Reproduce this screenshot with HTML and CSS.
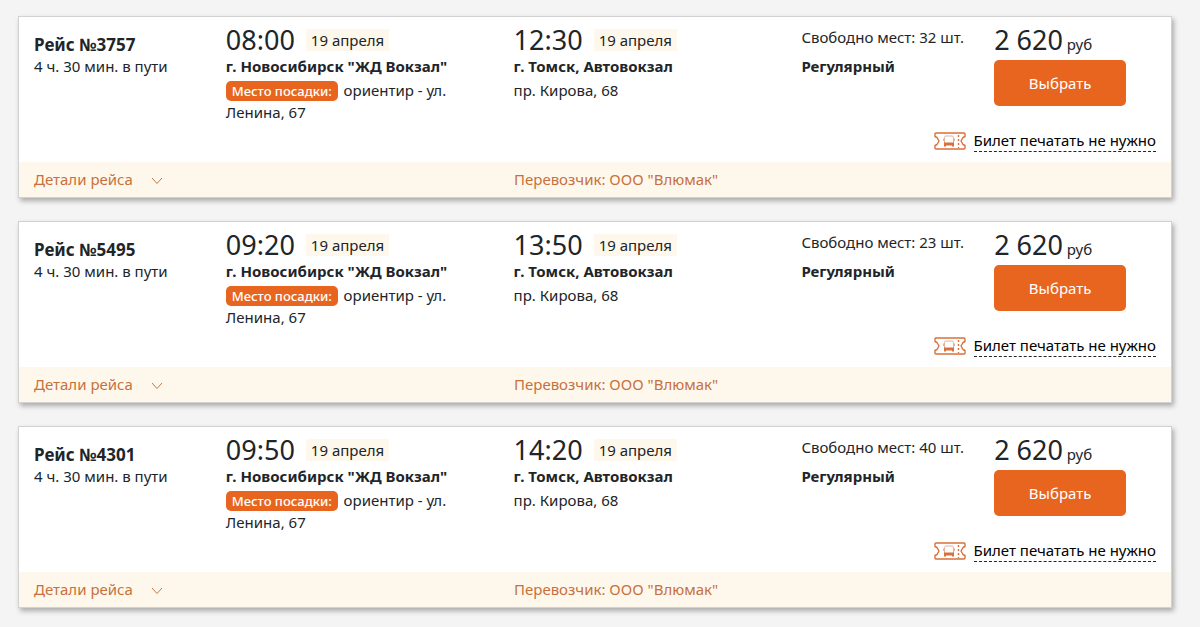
FILE: index.html
```html
<!DOCTYPE html>
<html lang="ru">
<head>
    <meta charset="UTF-8">
    <meta name="viewport" content="width=device-width, initial-scale=1.0">
    <title>Новосибирск - Томск, расписание рейсов</title>
    <link rel="stylesheet" href="styles.css">
</head>
<body>
    <!-- Shared icons -->
    <svg class="sprite" aria-hidden="true">
        <symbol id="icon-ticket" viewBox="0 0 32 18">
            <g fill="none" stroke="#d9703a" stroke-width="1.4" stroke-linejoin="round">
                <path d="M2 1H30Q31 1 31 2V4.500L29 5.500L27 9L29 12.500L31 13.500V16Q31 17 30 17H2Q1 17 1 16V13.500L3 12.500L5 9L3 5.500L1 4.500V2Q1 1 2 1Z"/>
                <path d="M24.500 3V16" stroke-dasharray="2 2"/>
                <path d="M10.500 11V5.500Q10.500 4 12 4H18Q19.500 4 19.500 5.500V11M9.500 6.500V9M20.500 6.500V9" stroke="#e3b29a" stroke-width="1"/>
            </g>
            <path d="M10 10.500H20V14.500H18V13.500H12V14.500H10Z" fill="#d9703a"/>
        </symbol>
        <symbol id="icon-arrow" viewBox="0 0 12 8">
            <path d="M1 1L6 6.500L11 1" fill="none" stroke="#c47845" stroke-width="1"/>
        </symbol>
    </svg>

    <main class="trips">
        <article class="trip">
            <div class="trip-info">
                <div class="col">
                    <h2 class="trip-number">Рейс №3757</h2>
                    <div>4 ч. 30 мин. в пути</div>
                </div>
                <div class="col">
                    <div class="point-time"><time class="big">08:00</time><span class="date">19 апреля</span></div>
                    <div class="bold">г. Новосибирск "ЖД Вокзал"</div>
                    <div class="address"><span class="badge">Место посадки:</span> ориентир - ул. Ленина, 67</div>
                </div>
                <div class="col">
                    <div class="point-time"><time class="big">12:30</time><span class="date">19 апреля</span></div>
                    <div class="bold">г. Томск, Автовокзал</div>
                    <div class="address">пр. Кирова, 68</div>
                </div>
                <div class="col">
                    <div class="seats">Свободно мест: 32 шт.</div>
                    <div class="bold">Регулярный</div>
                </div>
                <div class="col">
                    <div class="price"><span class="big">2 620</span> руб</div>
                    <button type="button" class="btn">Выбрать</button>
                </div>
            </div>
            <div class="ticket">
                <svg class="ticket-icon" aria-hidden="true"><use href="#icon-ticket"/></svg>
                <a href="#" class="ticket-link">Билет печатать не нужно</a>
            </div>
            <div class="trip-footer">
                <a href="#" class="details">Детали рейса <svg class="arrow" aria-hidden="true"><use href="#icon-arrow"/></svg></a>
                <div class="carrier">Перевозчик: ООО "Влюмак"</div>
            </div>
        </article>

        <article class="trip">
            <div class="trip-info">
                <div class="col">
                    <h2 class="trip-number">Рейс №5495</h2>
                    <div>4 ч. 30 мин. в пути</div>
                </div>
                <div class="col">
                    <div class="point-time"><time class="big">09:20</time><span class="date">19 апреля</span></div>
                    <div class="bold">г. Новосибирск "ЖД Вокзал"</div>
                    <div class="address"><span class="badge">Место посадки:</span> ориентир - ул. Ленина, 67</div>
                </div>
                <div class="col">
                    <div class="point-time"><time class="big">13:50</time><span class="date">19 апреля</span></div>
                    <div class="bold">г. Томск, Автовокзал</div>
                    <div class="address">пр. Кирова, 68</div>
                </div>
                <div class="col">
                    <div class="seats">Свободно мест: 23 шт.</div>
                    <div class="bold">Регулярный</div>
                </div>
                <div class="col">
                    <div class="price"><span class="big">2 620</span> руб</div>
                    <button type="button" class="btn">Выбрать</button>
                </div>
            </div>
            <div class="ticket">
                <svg class="ticket-icon" aria-hidden="true"><use href="#icon-ticket"/></svg>
                <a href="#" class="ticket-link">Билет печатать не нужно</a>
            </div>
            <div class="trip-footer">
                <a href="#" class="details">Детали рейса <svg class="arrow" aria-hidden="true"><use href="#icon-arrow"/></svg></a>
                <div class="carrier">Перевозчик: ООО "Влюмак"</div>
            </div>
        </article>

        <article class="trip">
            <div class="trip-info">
                <div class="col">
                    <h2 class="trip-number">Рейс №4301</h2>
                    <div>4 ч. 30 мин. в пути</div>
                </div>
                <div class="col">
                    <div class="point-time"><time class="big">09:50</time><span class="date">19 апреля</span></div>
                    <div class="bold">г. Новосибирск "ЖД Вокзал"</div>
                    <div class="address"><span class="badge">Место посадки:</span> ориентир - ул. Ленина, 67</div>
                </div>
                <div class="col">
                    <div class="point-time"><time class="big">14:20</time><span class="date">19 апреля</span></div>
                    <div class="bold">г. Томск, Автовокзал</div>
                    <div class="address">пр. Кирова, 68</div>
                </div>
                <div class="col">
                    <div class="seats">Свободно мест: 40 шт.</div>
                    <div class="bold">Регулярный</div>
                </div>
                <div class="col">
                    <div class="price"><span class="big">2 620</span> руб</div>
                    <button type="button" class="btn">Выбрать</button>
                </div>
            </div>
            <div class="ticket">
                <svg class="ticket-icon" aria-hidden="true"><use href="#icon-ticket"/></svg>
                <a href="#" class="ticket-link">Билет печатать не нужно</a>
            </div>
            <div class="trip-footer">
                <a href="#" class="details">Детали рейса <svg class="arrow" aria-hidden="true"><use href="#icon-arrow"/></svg></a>
                <div class="carrier">Перевозчик: ООО "Влюмак"</div>
            </div>
        </article>
    </main>
</body>
</html>
```
FILE: styles.css
```css
* {
    box-sizing: border-box;
}
body {
    margin: 0;
    background-color: #f4f4f4;
    color: #212529;
    font-family: "Noto Sans", "Open Sans", sans-serif;
    font-size: 15px;
    line-height: 22px;
}
.sprite {
    display: none;
}
.trips {
    display: flex;
    flex-direction: column;
    gap: 23px;
    padding: 16px 28px 16px 18px;
}
.trip {
    background-color: #fff;
    border: 1px solid #d2d2d2;
    box-shadow: 2px 3px 5px rgba(0,0,0,0.3);
}
.trip-info,
.trip-footer {
    display: grid;
    grid-template-columns: 2fr 3fr 3fr 2fr 2fr;
}
.trip-info {
    padding-top: 7px;
}
.col {
    padding: 0 15px;
}
.trip-number {
    margin: 0;
    padding-top: 11px;
    font-size: 17px;
    line-height: 20px;
}
.point-time {
    display: flex;
    align-items: center;
    gap: 11px;
    height: 31px;
}
.big {
    font-size: 27px;
    line-height: 32px;
}
.date {
    padding: 0 5px;
    background-color: #fef8ec;
}
.bold {
    font-weight: bold;
}
.address {
    padding-top: 2px;
}
.badge {
    display: inline-block;
    margin-right: 2px;
    padding: 0 6px;
    border-radius: 5px;
    background-color: #e8651f;
    color: #fff;
    font-size: 13px;
    font-weight: 500;
    line-height: 20px;
}
.seats {
    padding: 2px 0 7px;
    white-space: nowrap;
}
.price {
    height: 36px;
}
.btn {
    width: 132px;
    height: 46px;
    border: none;
    border-radius: 5px;
    background-color: #e8651f;
    color: #fff;
    font-family: inherit;
    font-size: 15px;
    cursor: pointer;
}
.btn:hover {
    background-color: #d45816;
}
.ticket {
    display: flex;
    justify-content: flex-end;
    align-items: center;
    gap: 8px;
    padding: 7px 15px 10px;
}
.ticket-icon {
    width: 32px;
    height: 18px;
}
.ticket-link {
    border-bottom: 1px dashed #212529;
    color: #000;
    line-height: 21px;
    text-decoration: none;
}
.trip-footer {
    padding: 6px 0 7px;
    background-color: #fef8ec;
    color: #c8703c;
}
.details {
    grid-column: 1 / 3;
    padding: 0 15px;
    color: inherit;
    text-decoration: none;
}
.arrow {
    width: 12px;
    height: 8px;
    margin-left: 14px;
}
.carrier {
    padding: 0 15px;
    white-space: nowrap;
}
```
